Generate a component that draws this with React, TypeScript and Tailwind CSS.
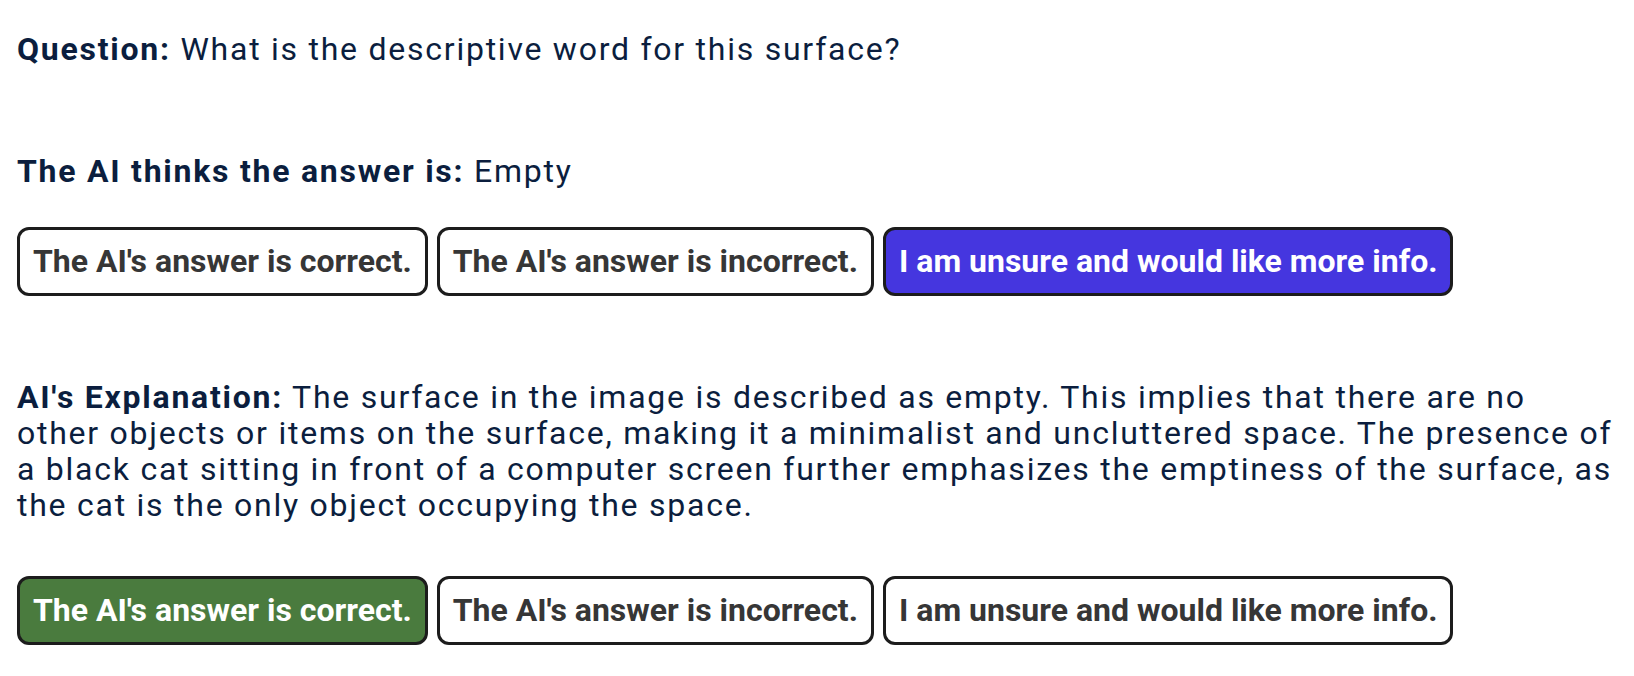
import React from "react";

const btnBase =
  "rounded-[12px] border-[3px] border-[#1c1c1c] px-[13px] py-[13px] text-[32px] font-bold leading-[37px] tracking-normal whitespace-nowrap";

function ButtonRow({ selected }: { selected: "correct" | "unsure" }) {
  return (
    <div className="flex gap-[9px]">
      <button
        className={
          selected === "correct"
            ? btnBase + " bg-[#4a7b3e] text-white"
            : btnBase + " bg-white text-[#363636]"
        }
      >
        The AI's answer is correct.
      </button>
      <button className={btnBase + " bg-white text-[#363636]"}>
        The AI's answer is incorrect.
      </button>
      <button
        className={
          selected === "unsure"
            ? btnBase + " bg-[#4536df] text-white"
            : btnBase + " bg-white text-[#363636]"
        }
      >
        I am unsure and would like more info.
      </button>
    </div>
  );
}

export default function App() {
  return (
    <div
      className="min-h-screen bg-white pl-[17px] pr-[8px] pt-[31px] text-[32px] leading-[36px] tracking-[1.75px] text-[#0b1e3e]"
      style={{ fontFamily: "Roboto, 'Liberation Sans', sans-serif" }}
    >
      <p>
        <span className="font-bold">Question:</span> What is the descriptive word for this surface?
      </p>
      <p className="mt-[86px]">
        <span className="font-bold">The AI thinks the answer is:</span> Empty
      </p>
      <div className="mt-[38px]">
        <ButtonRow selected="unsure" />
      </div>
      <p className="mt-[83px]">
        <span className="font-bold">AI's Explanation:</span> The surface in the image is described as
        empty. This implies that there are no
        <br />
        other objects or items on the surface, making it a minimalist and uncluttered space. The
        presence of
        <br />
        a black cat sitting in front of a computer screen further emphasizes the emptiness of the
        surface, as
        <br />
        the cat is the only object occupying the space.
      </p>
      <div className="mt-[53px]">
        <ButtonRow selected="correct" />
      </div>
    </div>
  );
}
